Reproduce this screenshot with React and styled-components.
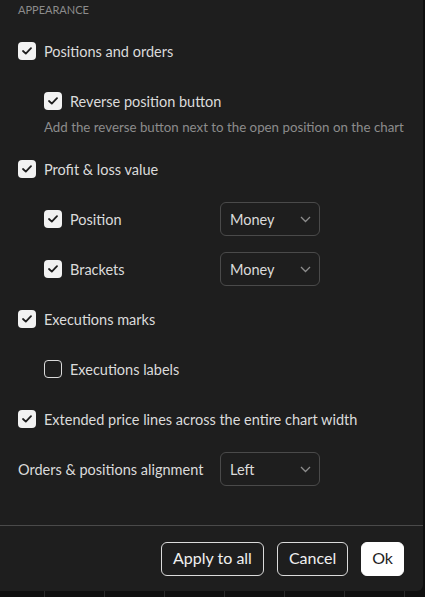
import React from 'react';
import styled, { createGlobalStyle } from 'styled-components';

const GlobalStyle = createGlobalStyle`
  html, body {
    margin: 0;
    padding: 0;
  }
  body {
    background-color: #0f0f0f;
    background-image: repeating-linear-gradient(90deg, transparent 0, transparent 44px, #2a2a2a 44px, #2a2a2a 45px, transparent 45px, transparent 60px);
    font-family: Lato, "Open Sans", sans-serif;
    width: 425px;
    height: 597px;
    overflow: hidden;
  }
`;

const Dialog = styled.div`
  width: 423px;
  height: 591px;
  background: #1e1e1e;
  border-bottom-right-radius: 6px;
  display: flex;
  flex-direction: column;
  color: #dbdbdb;
`;

const Content = styled.div`
  flex: 1;
  padding: 0 18px;
  display: flex;
  flex-direction: column;
  gap: 16px;
`;

const SectionTitle = styled.div`
  font-size: 11px;
  line-height: 20px;
  color: #8c8c8c;
  text-transform: uppercase;
  margin-bottom: -2px;
`;

const Row = styled.div`
  display: flex;
  align-items: center;
  height: 34px;
  padding-left: ${p => (p.$nested ? '26px' : '0')};
`;

const CheckLabel = styled.label`
  display: flex;
  align-items: center;
  gap: 8px;
  font-size: 14.5px;
  color: #dbdbdb;
  width: ${p => (p.$width ? `${p.$width}px` : 'auto')};
`;

const Box = styled.span`
  width: 18px;
  height: 18px;
  box-sizing: border-box;
  border-radius: 4px;
  display: flex;
  align-items: center;
  justify-content: center;
  background: ${p => (p.$checked ? '#f2f2f2' : 'transparent')};
  border: ${p => (p.$checked ? 'none' : '1.5px solid #dbdbdb')};
`;

const Hint = styled.div`
  font-size: 13.3px;
  line-height: 18px;
  color: #8c8c8c;
  padding-left: 26px;
  white-space: nowrap;
`;

const FieldLabel = styled.span`
  font-size: 14.5px;
  color: #dbdbdb;
  width: 202px;
`;

const Select = styled.div`
  width: 100px;
  height: 34px;
  box-sizing: border-box;
  border: 1px solid #4a4a4a;
  border-radius: 6px;
  display: flex;
  align-items: center;
  justify-content: space-between;
  padding: 0 8px 0 9px;
  font-size: 14.5px;
  color: #dbdbdb;
`;

const Footer = styled.div`
  border-top: 1px solid #4a4a4a;
  padding: 16px 19px 15px;
  display: flex;
  justify-content: flex-end;
  gap: 13px;
`;

const Button = styled.button`
  height: 34px;
  box-sizing: border-box;
  padding: 0 ${p => (p.$primary ? '10px' : '11px')} 2px;
  line-height: 1;
  border-radius: 6px;
  font-family: inherit;
  font-size: 16px;
  border: 1px solid ${p => (p.$primary ? '#ffffff' : '#dbdbdb')};
  background: ${p => (p.$primary ? '#ffffff' : 'transparent')};
  color: ${p => (p.$primary ? '#1e1e1e' : '#f0f0f0')};
`;

function Check({ checked }) {
  return (
    <Box $checked={checked}>
      {checked && (
        <svg width="10" height="8" viewBox="0 0 10 8">
          <path d="M1 4l2.8 2.6L9 1.2" fill="none" stroke="#1e1e1e" strokeWidth="1.8" strokeLinecap="round" strokeLinejoin="round" />
        </svg>
      )}
    </Box>
  );
}

function Chevron() {
  return (
    <svg width="11" height="7" viewBox="0 0 11 7">
      <path d="M1 1l4.5 4.5L10 1" fill="none" stroke="#8c8c8c" strokeWidth="1.3" />
    </svg>
  );
}

function CheckRow({ label, checked = true, nested, width }) {
  return (
    <Row $nested={nested}>
      <CheckLabel $width={width}>
        <Check checked={checked} />
        {label}
      </CheckLabel>
    </Row>
  );
}

function SelectRow({ label, value }) {
  return (
    <Row $nested>
      <CheckLabel $width={176}>
        <Check checked />
        {label}
      </CheckLabel>
      <Select>
        {value}
        <Chevron />
      </Select>
    </Row>
  );
}

export default function App() {
  return (
    <>
      <GlobalStyle />
      <Dialog>
        <Content>
          <SectionTitle>Appearance</SectionTitle>
          <CheckRow label="Positions and orders" />
          <div>
            <CheckRow label="Reverse position button" nested />
            <Hint>Add the reverse button next to the open position on the chart</Hint>
          </div>
          <CheckRow label="Profit & loss value" />
          <SelectRow label="Position" value="Money" />
          <SelectRow label="Brackets" value="Money" />
          <CheckRow label="Executions marks" />
          <CheckRow label="Executions labels" nested checked={false} />
          <CheckRow label="Extended price lines across the entire chart width" />
          <Row>
            <FieldLabel>Orders &amp; positions alignment</FieldLabel>
            <Select>
              Left
              <Chevron />
            </Select>
          </Row>
        </Content>
        <Footer>
          <Button>Apply to all</Button>
          <Button>Cancel</Button>
          <Button $primary>Ok</Button>
        </Footer>
      </Dialog>
    </>
  );
}
